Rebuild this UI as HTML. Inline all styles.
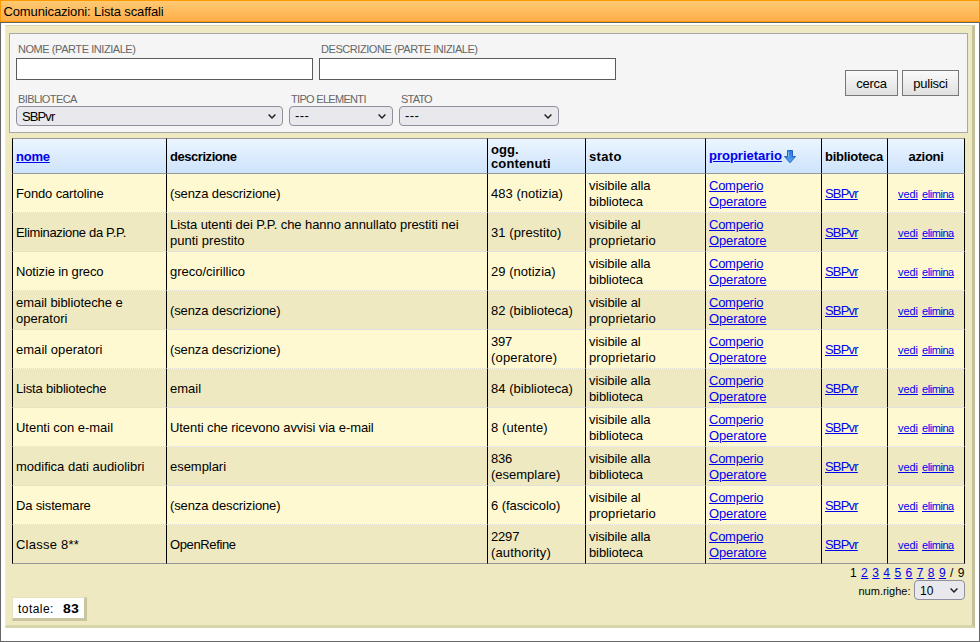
<!DOCTYPE html>
<html lang="it">
<head>
<meta charset="utf-8">
<title>Comunicazioni: Lista scaffali</title>
<style>
html,body{margin:0;padding:0;}
body{width:980px;height:642px;position:relative;overflow:hidden;background:#fff;font-family:"Liberation Sans",sans-serif;font-size:13px;line-height:16px;color:#000;}
*{box-sizing:border-box;}
a{color:#0000ee;text-decoration:underline;}
#title{position:absolute;left:0;top:0;width:980px;height:22px;border:1px solid #ff9900;background:linear-gradient(#ffc973,#ffae4a);padding:3px 0 0 2.5px;line-height:16px;white-space:nowrap;letter-spacing:-0.13px;}
#frame{position:absolute;left:0;top:22px;width:980px;height:620px;border:1px solid #666;border-top-color:#636363;background:#fff;}
#panel{position:absolute;left:5px;top:25px;width:970px;height:603px;background:#eee9c1;border-style:solid;border-width:1px 3px 3px 1px;border-color:#d9d5ab #c5c19d #d9d5ab #f2eeca;}
#form{position:absolute;left:9px;top:33px;width:959px;height:100px;background:#f5f5f5;border:1px solid #a8a8a8;}
.lbl{position:absolute;font-size:11px;line-height:13px;color:#666;white-space:nowrap;letter-spacing:-0.42px;}
.txt{position:absolute;height:22px;width:297px;background:#fff;border:1px solid #5a5a5a;border-radius:0;margin:0;padding:1px 2px;outline:none;font:13px "Liberation Sans",sans-serif;}
.selw{position:absolute;height:20px;}
.sel{display:block;width:100%;height:20px;margin:0;-webkit-appearance:none;appearance:none;background:#e9e9ed;border:1px solid #8f8f9d;border-radius:4px;font:inherit;font-family:"Liberation Sans",sans-serif;line-height:18px;padding:1px 0 0 5px;color:#000;outline:none;white-space:nowrap;}
.selw svg{position:absolute;right:7px;top:8px;pointer-events:none;}
.btn{position:absolute;top:70px;height:26px;margin:0;border:1px solid #777;border-radius:0;background:linear-gradient(#fafafa,#e0e0e0);text-align:center;line-height:22px;font:13px "Liberation Sans",sans-serif;padding:1px 0 0 0;color:#000;}

#tb{position:absolute;left:12px;top:138px;width:953px;table-layout:fixed;border-collapse:separate;border-spacing:0;font-size:13px;line-height:16px;}
#tb th,#tb td{border-left:1px solid #000;padding:2px 3px 0 3px;vertical-align:middle;text-align:left;overflow:hidden;}
#tb th:last-child,#tb td:last-child{border-right:1px solid #000;}
#tb th{padding-top:0;height:36px;border-top:1px solid #9a9a9a;border-bottom:1px solid #9a9a9a;background:linear-gradient(#ecf5ff,#cde3fb);font-weight:bold;line-height:15px;white-space:nowrap;}
#tb td{height:39px;border-bottom:1px dotted #dcdcdc;}
#tb tr.o td{background:#fff9d2;}
#tb tr.e td{background:#eee9c1;}
#tb tbody tr:last-child td{border-bottom:1px solid #989898;}
#tb .c{text-align:center;}
#tb td.az{font-size:11px;white-space:nowrap;text-align:left;padding-left:10px;word-spacing:1px;}
.arr{position:absolute;left:77px;top:10px;}
#pg{position:absolute;right:15px;top:565px;font-size:12px;line-height:16px;white-space:nowrap;letter-spacing:0.55px;}
#nr{position:absolute;left:858.5px;top:583px;font-size:11px;line-height:16px;white-space:nowrap;}
#tot{position:absolute;left:12px;top:597px;width:75px;height:24px;background:#fff;border-style:solid;border-width:1px 3px 3px 1px;border-color:#e6e2bc #c9c5a0 #c9c5a0 #e6e2bc;font-size:12px;line-height:16px;padding:3px 0 0 5px;white-space:nowrap;}
</style>
</head>
<body>
<div id="frame"></div>
<div id="title">Comunicazioni: Lista scaffali</div>
<div id="panel"></div>
<div id="form"></div>
<div class="lbl" style="left:18px;top:43px;letter-spacing:-0.44px">NOME (PARTE INIZIALE)</div>
<input type="text" class="txt" style="left:16px;top:58px" aria-label="Nome (parte iniziale)">
<div class="lbl" style="left:321px;top:43px;letter-spacing:-0.44px">DESCRIZIONE (PARTE INIZIALE)</div>
<input type="text" class="txt" style="left:319px;top:58px" aria-label="Descrizione (parte iniziale)">
<button type="button" class="btn" style="left:845px;width:53px;letter-spacing:-0.28px">cerca</button>
<button type="button" class="btn" style="left:902px;width:57px;letter-spacing:-0.23px">pulisci</button>
<div class="lbl" style="left:18px;top:93px;letter-spacing:-0.61px">BIBLIOTECA</div>
<div class="selw" style="left:16px;top:106px;width:267px"><select class="sel" style="letter-spacing:-0.9px"><option>SBPvr</option></select><svg width="8" height="5" viewBox="0 0 8 5"><path d="M0.6 0.6 L4 4 L7.4 0.6" fill="none" stroke="#1c1c1c" stroke-width="1.4"/></svg></div>
<div class="lbl" style="left:291px;top:93px;letter-spacing:-0.69px">TIPO ELEMENTI</div>
<div class="selw" style="left:289px;top:106px;width:104px"><select class="sel" style="letter-spacing:0.47px;padding-top:0"><option>---</option></select><svg width="8" height="5" viewBox="0 0 8 5"><path d="M0.6 0.6 L4 4 L7.4 0.6" fill="none" stroke="#1c1c1c" stroke-width="1.4"/></svg></div>
<div class="lbl" style="left:401px;top:93px;letter-spacing:-0.79px">STATO</div>
<div class="selw" style="left:399px;top:106px;width:160px"><select class="sel" style="letter-spacing:0.47px;padding-top:0"><option>---</option></select><svg width="8" height="5" viewBox="0 0 8 5"><path d="M0.6 0.6 L4 4 L7.4 0.6" fill="none" stroke="#1c1c1c" stroke-width="1.4"/></svg></div>
<!--TABLE-->
<table id="tb" cellspacing="0" cellpadding="0">
<colgroup><col style="width:154px"><col style="width:321px"><col style="width:98px"><col style="width:120px"><col style="width:116px"><col style="width:66px"><col style="width:78px"></colgroup>
<thead><tr><th><span style="letter-spacing:-0.23px"><a href="#">nome</a></span></th><th><span style="letter-spacing:-0.45px">descrizione</span></th><th style="line-height:14px;padding-top:1px"><span style="letter-spacing:0.09px">ogg.</span><br><span style="letter-spacing:0.13px">contenuti</span></th><th><span style="letter-spacing:0.35px">stato</span></th><th style="position:relative"><span style="position:relative;top:-1px"><span style="letter-spacing:-0.01px"><a href="#">proprietario</a></span></span><svg class="arr" width="14" height="15" viewBox="0 0 14 15"><defs><linearGradient id="ag" x1="0" y1="0" x2="0" y2="1"><stop offset="0" stop-color="#2d7bdc"/><stop offset="0.55" stop-color="#3f8de4"/><stop offset="1" stop-color="#66adf0"/></linearGradient></defs><path d="M4.5 1.5 H9.5 V7.5 H12.5 L7 13.8 L1.5 7.5 H4.5 Z" fill="url(#ag)" stroke="#1c62c8" stroke-width="1" stroke-linejoin="miter"/><path d="M5.6 2.6 V8" stroke="#8cc6f6" stroke-width="0.9" fill="none"/></svg></th><th><span style="letter-spacing:-0.27px">biblioteca</span></th><th class="c"><span style="letter-spacing:-0.32px">azioni</span></th></tr></thead>
<tbody>
<tr class="o"><td><span style="letter-spacing:-0.14px">Fondo cartoline</span></td><td><span style="letter-spacing:-0.12px">(senza descrizione)</span></td><td><span style="letter-spacing:0.03px">483 (notizia)</span></td><td><span style="letter-spacing:-0.12px">visibile alla</span><br><span style="letter-spacing:-0.11px">biblioteca</span></td><td><span style="letter-spacing:-0.26px"><a href="#">Comperio</a></span><br><span style="letter-spacing:-0.12px"><a href="#">Operatore</a></span></td><td><span style="letter-spacing:-0.81px"><a href="#">SBPvr</a></span></td><td class="c az"><span style="letter-spacing:-0.07px"><a href="#">vedi</a></span> <span style="letter-spacing:-0.44px"><a href="#">elimina</a></span></td></tr>
<tr class="e"><td><span style="letter-spacing:-0.33px">Eliminazione da P.P.</span></td><td><span style="letter-spacing:-0.07px">Lista utenti dei P.P. che hanno annullato prestiti nei</span><br><span style="letter-spacing:0.01px">punti prestito</span></td><td><span style="letter-spacing:0.08px">31 (prestito)</span></td><td><span style="letter-spacing:-0.1px">visibile al</span><br><span style="letter-spacing:0.09px">proprietario</span></td><td><span style="letter-spacing:-0.26px"><a href="#">Comperio</a></span><br><span style="letter-spacing:-0.12px"><a href="#">Operatore</a></span></td><td><span style="letter-spacing:-0.81px"><a href="#">SBPvr</a></span></td><td class="c az"><span style="letter-spacing:-0.07px"><a href="#">vedi</a></span> <span style="letter-spacing:-0.44px"><a href="#">elimina</a></span></td></tr>
<tr class="o"><td><span style="letter-spacing:-0.14px">Notizie in greco</span></td><td><span style="letter-spacing:-0.01px">greco/cirillico</span></td><td><span style="letter-spacing:0.03px">29 (notizia)</span></td><td><span style="letter-spacing:-0.12px">visibile alla</span><br><span style="letter-spacing:-0.11px">biblioteca</span></td><td><span style="letter-spacing:-0.26px"><a href="#">Comperio</a></span><br><span style="letter-spacing:-0.12px"><a href="#">Operatore</a></span></td><td><span style="letter-spacing:-0.81px"><a href="#">SBPvr</a></span></td><td class="c az"><span style="letter-spacing:-0.07px"><a href="#">vedi</a></span> <span style="letter-spacing:-0.44px"><a href="#">elimina</a></span></td></tr>
<tr class="e"><td><span style="letter-spacing:-0.05px">email biblioteche e</span><br><span style="letter-spacing:0.01px">operatori</span></td><td><span style="letter-spacing:-0.12px">(senza descrizione)</span></td><td><span style="letter-spacing:0.02px">82 (biblioteca)</span></td><td><span style="letter-spacing:-0.1px">visibile al</span><br><span style="letter-spacing:0.09px">proprietario</span></td><td><span style="letter-spacing:-0.26px"><a href="#">Comperio</a></span><br><span style="letter-spacing:-0.12px"><a href="#">Operatore</a></span></td><td><span style="letter-spacing:-0.81px"><a href="#">SBPvr</a></span></td><td class="c az"><span style="letter-spacing:-0.07px"><a href="#">vedi</a></span> <span style="letter-spacing:-0.44px"><a href="#">elimina</a></span></td></tr>
<tr class="o"><td><span style="letter-spacing:0.03px">email operatori</span></td><td><span style="letter-spacing:-0.12px">(senza descrizione)</span></td><td><span style="letter-spacing:-0.2px">397</span><br><span style="letter-spacing:0.17px">(operatore)</span></td><td><span style="letter-spacing:-0.1px">visibile al</span><br><span style="letter-spacing:0.09px">proprietario</span></td><td><span style="letter-spacing:-0.26px"><a href="#">Comperio</a></span><br><span style="letter-spacing:-0.12px"><a href="#">Operatore</a></span></td><td><span style="letter-spacing:-0.81px"><a href="#">SBPvr</a></span></td><td class="c az"><span style="letter-spacing:-0.07px"><a href="#">vedi</a></span> <span style="letter-spacing:-0.44px"><a href="#">elimina</a></span></td></tr>
<tr class="e"><td><span style="letter-spacing:-0.17px">Lista biblioteche</span></td><td><span style="letter-spacing:0.02px">email</span></td><td><span style="letter-spacing:0.02px">84 (biblioteca)</span></td><td><span style="letter-spacing:-0.12px">visibile alla</span><br><span style="letter-spacing:-0.11px">biblioteca</span></td><td><span style="letter-spacing:-0.26px"><a href="#">Comperio</a></span><br><span style="letter-spacing:-0.12px"><a href="#">Operatore</a></span></td><td><span style="letter-spacing:-0.81px"><a href="#">SBPvr</a></span></td><td class="c az"><span style="letter-spacing:-0.07px"><a href="#">vedi</a></span> <span style="letter-spacing:-0.44px"><a href="#">elimina</a></span></td></tr>
<tr class="o"><td><span style="letter-spacing:-0.03px">Utenti con e-mail</span></td><td><span style="letter-spacing:-0.08px">Utenti che ricevono avvisi via e-mail</span></td><td><span style="letter-spacing:0.11px">8 (utente)</span></td><td><span style="letter-spacing:-0.12px">visibile alla</span><br><span style="letter-spacing:-0.11px">biblioteca</span></td><td><span style="letter-spacing:-0.26px"><a href="#">Comperio</a></span><br><span style="letter-spacing:-0.12px"><a href="#">Operatore</a></span></td><td><span style="letter-spacing:-0.81px"><a href="#">SBPvr</a></span></td><td class="c az"><span style="letter-spacing:-0.07px"><a href="#">vedi</a></span> <span style="letter-spacing:-0.44px"><a href="#">elimina</a></span></td></tr>
<tr class="e"><td><span style="letter-spacing:-0.01px">modifica dati audiolibri</span></td><td><span style="letter-spacing:-0.04px">esemplari</span></td><td><span style="letter-spacing:-0.2px">836</span><br><span style="letter-spacing:-0.01px">(esemplare)</span></td><td><span style="letter-spacing:-0.12px">visibile alla</span><br><span style="letter-spacing:-0.11px">biblioteca</span></td><td><span style="letter-spacing:-0.26px"><a href="#">Comperio</a></span><br><span style="letter-spacing:-0.12px"><a href="#">Operatore</a></span></td><td><span style="letter-spacing:-0.81px"><a href="#">SBPvr</a></span></td><td class="c az"><span style="letter-spacing:-0.07px"><a href="#">vedi</a></span> <span style="letter-spacing:-0.44px"><a href="#">elimina</a></span></td></tr>
<tr class="o"><td><span style="letter-spacing:-0.16px">Da sistemare</span></td><td><span style="letter-spacing:-0.12px">(senza descrizione)</span></td><td><span style="letter-spacing:-0.07px">6 (fascicolo)</span></td><td><span style="letter-spacing:-0.1px">visibile al</span><br><span style="letter-spacing:0.09px">proprietario</span></td><td><span style="letter-spacing:-0.26px"><a href="#">Comperio</a></span><br><span style="letter-spacing:-0.12px"><a href="#">Operatore</a></span></td><td><span style="letter-spacing:-0.81px"><a href="#">SBPvr</a></span></td><td class="c az"><span style="letter-spacing:-0.07px"><a href="#">vedi</a></span> <span style="letter-spacing:-0.44px"><a href="#">elimina</a></span></td></tr>
<tr class="e"><td><span style="letter-spacing:0.23px">Classe 8**</span></td><td><span style="letter-spacing:-0.37px">OpenRefine</span></td><td><span style="letter-spacing:-0.18px">2297</span><br><span style="letter-spacing:0.12px">(authority)</span></td><td><span style="letter-spacing:-0.12px">visibile alla</span><br><span style="letter-spacing:-0.11px">biblioteca</span></td><td><span style="letter-spacing:-0.26px"><a href="#">Comperio</a></span><br><span style="letter-spacing:-0.12px"><a href="#">Operatore</a></span></td><td><span style="letter-spacing:-0.81px"><a href="#">SBPvr</a></span></td><td class="c az"><span style="letter-spacing:-0.07px"><a href="#">vedi</a></span> <span style="letter-spacing:-0.44px"><a href="#">elimina</a></span></td></tr>
</tbody></table>
<!--/TABLE-->
<!--FOOTER-->
<div id="pg">1 <a href="#">2</a> <a href="#">3</a> <a href="#">4</a> <a href="#">5</a> <a href="#">6</a> <a href="#">7</a> <a href="#">8</a> <a href="#">9</a> / 9</div>
<div id="nr">num.righe:</div>
<div class="selw" style="left:914px;top:580px;width:51px"><select class="sel" style="font-size:12px;padding-top:1px"><option>10</option></select><svg width="8" height="5" viewBox="0 0 8 5"><path d="M0.6 0.6 L4 4 L7.4 0.6" fill="none" stroke="#1c1c1c" stroke-width="1.4"/></svg></div>
<div id="tot"><span style="letter-spacing:0.45px">totale:</span><b style="position:absolute;left:50px;display:inline-block;transform:scaleX(1.17);transform-origin:0 0;letter-spacing:0.1px">83</b></div>

</body>
</html>
